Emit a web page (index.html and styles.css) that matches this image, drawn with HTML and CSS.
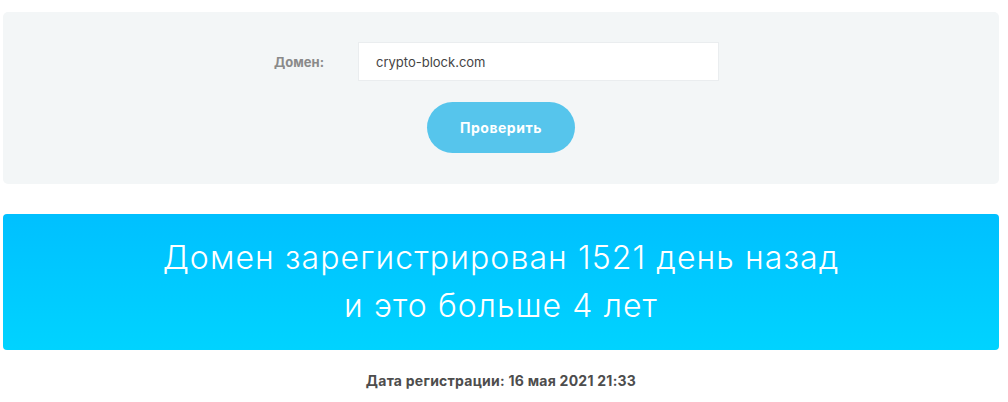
FILE: index.html
```html
<!DOCTYPE html>
<html lang="ru">
<head>
<meta charset="utf-8">
<title>Проверка домена</title>
<link rel="stylesheet" href="styles.css">
</head>
<body>
<div class="page">
  <form class="check-form">
    <div class="form-row">
      <label class="form-label" for="domain">Домен:</label>
      <input class="form-input" id="domain" type="text" value="crypto-block.com">
    </div>
    <div class="form-actions">
      <button class="btn-check" type="button">Проверить</button>
    </div>
  </form>
  <div class="result-banner">
    <p class="result-line">Домен зарегистрирован 1521 день назад</p>
    <p class="result-line">и это больше 4 лет</p>
  </div>
  <p class="reg-date">Дата регистрации: 16 мая 2021 21:33</p>
</div>
</body>
</html>
```

FILE: styles.css
```css
* { box-sizing: border-box; }
html, body { margin: 0; padding: 0; background: #fff; }
body { font-family: Inter, "Open Sans", "Liberation Sans", sans-serif; }
.page { padding: 12px 9px 0 3px; }
.check-form {
  margin: 0;
  background: #f3f6f7;
  border-radius: 5px;
  padding: 30px 0 31px;
  display: flex;
  flex-direction: column;
  align-items: center;
}
.form-row {
  display: flex;
  align-items: center;
  margin-right: 9px;
}
.form-label {
  width: 84px;
  font-size: 13px;
  font-weight: 700;
  color: #8a8a8a;
}
.form-input {
  width: 361px;
  height: 39px;
  border: 1px solid #eaedef;
  background: #fff;
  padding: 0 17px;
  font-family: inherit;
  font-size: 13px;
  color: #444;
  outline: none;
  border-radius: 0;
}
.form-actions { margin-top: 21px; display: flex; }
.btn-check {
  width: 148px;
  height: 51px;
  border: none;
  border-radius: 26px;
  background: #56c5ec;
  color: #fff;
  font-family: inherit;
  font-size: 14px;
  font-weight: 700;
  letter-spacing: 0.5px;
  cursor: pointer;
}
.result-banner {
  margin-top: 30px;
  background: linear-gradient(to bottom, #00c0ff, #00d3ff);
  border-radius: 4px;
  padding: 20px 0;
  text-align: center;
  color: #fff;
}
.result-line {
  margin: 0;
  font-size: 32px;
  line-height: 48px;
  font-weight: 300;
  letter-spacing: 1.1px;
}
.reg-date {
  margin: 22px 0 0;
  text-align: center;
  font-size: 14px;
  font-weight: 700;
  letter-spacing: 0.25px;
  color: #4d4d4d;
}
```
